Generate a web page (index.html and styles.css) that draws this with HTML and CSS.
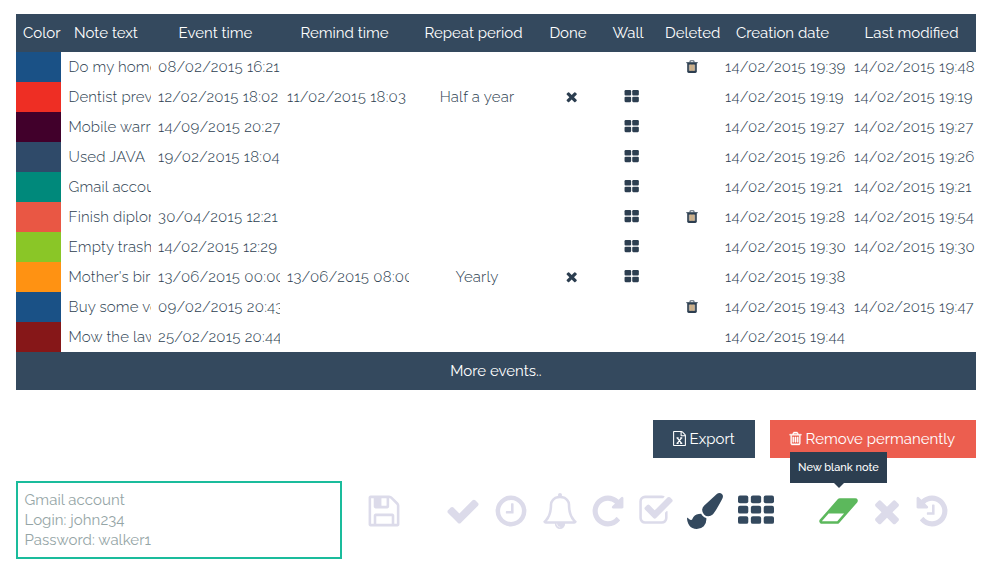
FILE: index.html
```html
<!DOCTYPE html>
<html lang="en">
<head>
<meta charset="utf-8">
<title>Notes</title>
<link rel="stylesheet" href="styles.css">
</head>
<body>
<svg class="sprite" aria-hidden="true">
<symbol id="save" viewBox="0 0 1792 1792"><path d="M512 1536h768v-384h-768v384zm896 0h128v-896q0-14-10-38.5t-20-34.5l-281-281q-10-10-34-20t-39-10v416q0 40-28 68t-68 28h-576q-40 0-68-28t-28-68v-416h-128v1280h128v-416q0-40 28-68t68-28h832q40 0 68 28t28 68v416zm-384-928v-320q0-13-9.5-22.5t-22.5-9.5h-192q-13 0-22.5 9.5t-9.5 22.5v320q0 13 9.5 22.5t22.5 9.5h192q13 0 22.5-9.5t9.5-22.5zm640 32v928q0 40-28 68t-68 28h-1344q-40 0-68-28t-28-68v-1344q0-40 28-68t68-28h928q40 0 88 20t76 48l280 280q28 28 48 76t20 88z"/></symbol>
<symbol id="check" viewBox="0 0 1792 1792"><path d="M1671 566q0 40-28 68l-724 724-136 136q-28 28-68 28t-68-28l-136-136-362-362q-28-28-28-68t28-68l136-136q28-28 68-28t68 28l294 295 656-657q28-28 68-28t68 28l136 136q28 28 28 68z"/></symbol>
<symbol id="clock" viewBox="0 0 1792 1792"><path d="M1024 544v448q0 14-9 23t-23 9h-320q-14 0-23-9t-9-23v-64q0-14 9-23t23-9h224v-352q0-14 9-23t23-9h64q14 0 23 9t9 23zm416 352q0-148-73-273t-198-198-273-73-273 73-198 198-73 273 73 273 198 198 273 73 273-73 198-198 73-273zm224 0q0 209-103 385.5t-279.5 279.5-385.5 103-385.5-103-279.5-279.5-103-385.5 103-385.5 279.5-279.5 385.5-103 385.5 103 279.5 279.5 103 385.5z"/></symbol>
<symbol id="bell" viewBox="0 0 1792 1792"><path d="M912 1696q0-16-16-16-59 0-101.5-42.5t-42.5-101.5q0-16-16-16t-16 16q0 73 51.5 124.5t124.5 51.5q16 0 16-16zm-666-288h1300q-266-300-266-832 0-51-24-105t-69-103-121.5-80.5-169.5-31.5-169.5 31.5-121.5 80.5-69 103-24 105q0 532-266 832zm1482 0q0 52-38 90t-90 38h-448q0 106-75 181t-181 75-181-75-75-181h-448q-52 0-90-38t-38-90q50-42 91-88t85-119.5 74.5-158.5 50-206 19.5-260q0-152 117-282.5t307-158.5q-8-19-8-39 0-40 28-68t68-28 68 28 28 68q0 20-8 39 190 28 307 158.5t117 282.5q0 139 19.5 260t50 206 74.5 158.5 85 119.5 91 88z"/></symbol>
<symbol id="repeat" viewBox="0 0 1792 1792"><path d="M1664 256v448q0 26-19 45t-45 19h-448q-42 0-59-40-17-39 14-69l138-138q-148-137-349-137-104 0-198.5 40.5t-163.5 109.5-109.5 163.5-40.5 198.5 40.5 198.5 109.5 163.5 163.5 109.5 198.5 40.5q119 0 225-52t179-147q7-10 23-12 15 0 25 9l137 138q9 8 9.5 20.5t-7.5 22.5q-109 132-264 204.5t-327 72.5q-156 0-298-61t-245-164-164-245-61-298 61-298 164-245 245-164 298-61q147 0 284.5 55.5t244.5 156.5l130-129q29-31 70-14 39 17 39 59z"/></symbol>
<symbol id="checkbox" viewBox="0 0 1792 1792"><path d="M1472 930v318q0 119-84.5 203.5t-203.5 84.5h-832q-119 0-203.5-84.5t-84.5-203.5v-832q0-119 84.5-203.5t203.5-84.5h832q63 0 117 25 15 7 18 23 3 17-9 29l-49 49q-10 10-23 10-3 0-9-2-23-6-45-6h-832q-66 0-113 47t-47 113v832q0 66 47 113t113 47h832q66 0 113-47t47-113v-254q0-13 9-22l64-64q10-10 23-10 6 0 12 3 20 8 20 29zm231-489l-814 814q-24 24-57 24t-57-24l-430-430q-24-24-24-57t24-57l110-110q24-24 57-24t57 24l263 263 647-647q24-24 57-24t57 24l110 110q24 24 24 57t-24 57z"/></symbol>
<symbol id="brush" viewBox="0 0 1792 1792"><path d="M1615 0q70 0 122.5 46.5t52.5 116.5q0 63-45 151-332 629-465 752-97 91-218 91-126 0-216.5-92.5t-90.5-219.5q0-128 92-212l638-579q59-54 130-54zm-909 1034q39 76 106.5 130t150.5 76l1 71q4 213-129.5 347t-348.5 134q-123 0-218-46.5t-152.5-127.5-86.5-183-29-220q7 5 41 30t62 44.5 59 36.5 46 17q41 0 55-37 25-66 57.5-112.5t69.5-76 88-47.5 103-25.5 125-10.5z"/></symbol>
<symbol id="grid" viewBox="0 0 1792 1792"><rect x="0" y="128" width="512" height="384" rx="96"/><rect x="640" y="128" width="512" height="384" rx="96"/><rect x="1280" y="128" width="512" height="384" rx="96"/><rect x="0" y="640" width="512" height="384" rx="96"/><rect x="640" y="640" width="512" height="384" rx="96"/><rect x="1280" y="640" width="512" height="384" rx="96"/><rect x="0" y="1152" width="512" height="384" rx="96"/><rect x="640" y="1152" width="512" height="384" rx="96"/><rect x="1280" y="1152" width="512" height="384" rx="96"/></symbol>
<symbol id="wall" viewBox="0 0 1792 1792"><rect x="64" y="128" width="768" height="640" rx="128"/><rect x="960" y="128" width="768" height="640" rx="128"/><rect x="64" y="896" width="768" height="640" rx="128"/><rect x="960" y="896" width="768" height="640" rx="128"/></symbol>
<symbol id="eraser" viewBox="0 0 2048 1792"><path d="M960 1408l336-384h-768l-336 384h768zm1013-1077q15 34 9.5 71.5t-30.5 65.5l-896 1024q-38 44-96 44h-768q-38 0-69.5-20.5t-47.5-54.5q-15-34-9.5-71.5t30.5-65.5l896-1024q38-44 96-44h768q38 0 69.5 20.5t47.5 54.5z"/></symbol>
<symbol id="times" viewBox="0 0 1792 1792"><path d="M1490 1322q0 40-28 68l-136 136q-28 28-68 28t-68-28l-294-294-294 294q-28 28-68 28t-68-28l-136-136q-28-28-28-68t28-68l294-294-294-294q-28-28-28-68t28-68l136-136q28-28 68-28t68 28l294 294 294-294q28-28 68-28t68 28l136 136q28 28 28 68t-28 68l-294 294 294 294q28 28 28 68z"/></symbol>
<symbol id="history" viewBox="0 0 1792 1792"><path d="M1664 896q0 156-61 298t-164 245-245 164-298 61q-172 0-327-72.5t-264-204.5q-7-10-6.5-22.5t8.5-20.5l137-138q10-9 25-9 16 2 23 12 73 95 179 147t225 52q104 0 198.5-40.5t163.5-109.5 109.5-163.5 40.5-198.5-40.5-198.5-109.5-163.5-163.5-109.5-198.5-40.5q-98 0-188 35.5t-160 101.5l137 138q31 30 14 69-17 40-59 40h-448q-26 0-45-19t-19-45v-448q0-42 40-59 39-17 69 14l130 129q107-101 244.5-156.5t284.5-55.5 298 61 245 164 164 245 61 298zm-640-288v448q0 14-9 23t-23 9h-320q-14 0-23-9t-9-23v-64q0-14 9-23t23-9h224v-352q0-14 9-23t23-9h64q14 0 23 9t9 23z"/></symbol>
<symbol id="trash" viewBox="0 0 1792 1792"><path d="M704 736v576q0 14-9 23t-23 9h-64q-14 0-23-9t-9-23v-576q0-14 9-23t23-9h64q14 0 23 9t9 23zm256 0v576q0 14-9 23t-23 9h-64q-14 0-23-9t-9-23v-576q0-14 9-23t23-9h64q14 0 23 9t9 23zm256 0v576q0 14-9 23t-23 9h-64q-14 0-23-9t-9-23v-576q0-14 9-23t23-9h64q14 0 23 9t9 23zm128 724v-948h-896v948q0 22 7 40.5t14.5 27 10.5 8.5h832q3 0 10.5-8.5t14.5-27 7-40.5zm-672-1076h448l-48-117q-7-9-17-11h-317q-10 2-17 11zm928 32v64q0 14-9 23t-23 9h-96v948q0 83-47 143.5t-113 60.5h-832q-66 0-113-58.5t-47-141.5v-952h-96q-14 0-23-9t-9-23v-64q0-14 9-23t23-9h309l70-167q15-37 54-63t79-26h320q40 0 79 26t54 63l70 167h309q14 0 23 9t9 23z"/></symbol>
<symbol id="bin" viewBox="0 0 12 13"><path d="M4 2.4V1.6Q4 .7 5 .7H7Q8 .7 8 1.6V2.4" fill="none" stroke="currentColor" stroke-width="1.1" opacity=".8"/><rect x=".3" y="2" width="11.4" height="1.2" opacity=".8"/><path d="M1.2 3H10.8V11.6Q10.8 13 9.4 13H2.6Q1.2 13 1.2 11.6Z"/><rect x="2.8" y="4.6" width="6.4" height="6.2" fill="#b3a99c"/><path d="M4.9 4.6V10.8M7.1 4.6V10.8" stroke="#e6b877" stroke-width="1"/></symbol>
<symbol id="sheet" viewBox="0 0 1792 1792"><path d="M1596 380q28 28 48 76t20 88v1152q0 40-28 68t-68 28h-1344q-40 0-68-28t-28-68v-1600q0-40 28-68t68-28h896q40 0 88 20t76 48zm-444-244v376h376q-10-29-22-41l-313-313q-12-12-41-22zm384 1528v-1024h-416q-40 0-68-28t-28-68v-416h-768v1536h1280z"/><path d="M620 820L1150 1490M1150 820L620 1490M540 820h250M980 820h250M540 1490h250M980 1490h250" fill="none" stroke="currentColor" stroke-width="150"/></symbol>
</svg>
<main>
<section class="table">
<div class="row head"><span class="h-color">Color</span><span class="h-note">Note text</span><span class="h-event">Event time</span><span class="h-remind">Remind time</span><span class="h-repeat">Repeat period</span><span class="h-done">Done</span><span class="h-wall">Wall</span><span class="h-deleted">Deleted</span><span class="h-created">Creation date</span><span class="h-modified">Last modified</span></div>
<div class="row"><i class="blue"></i><span class="note">Do my home</span><span>08/02/2015 16:21</span><span></span><span></span><span></span><span></span><span class="mid"><svg class="bin"><use href="#bin"/></svg></span><span>14/02/2015 19:39</span><span>14/02/2015 19:48</span></div>
<div class="row"><i class="red"></i><span class="note">Dentist prev</span><span>12/02/2015 18:02</span><span>11/02/2015 18:03</span><span class="mid">Half a year</span><span class="mid"><svg><use href="#times"/></svg></span><span class="mid"><svg><use href="#wall"/></svg></span><span></span><span>14/02/2015 19:19</span><span>14/02/2015 19:19</span></div>
<div class="row"><i class="plum"></i><span class="note">Mobile warr</span><span>14/09/2015 20:27</span><span></span><span></span><span></span><span class="mid"><svg><use href="#wall"/></svg></span><span></span><span>14/02/2015 19:27</span><span>14/02/2015 19:27</span></div>
<div class="row"><i class="slate"></i><span class="note">Used JAVA</span><span>19/02/2015 18:04</span><span></span><span></span><span></span><span class="mid"><svg><use href="#wall"/></svg></span><span></span><span>14/02/2015 19:26</span><span>14/02/2015 19:26</span></div>
<div class="row"><i class="teal"></i><span class="note">Gmail accou</span><span></span><span></span><span></span><span></span><span class="mid"><svg><use href="#wall"/></svg></span><span></span><span>14/02/2015 19:21</span><span>14/02/2015 19:21</span></div>
<div class="row"><i class="coral"></i><span class="note">Finish diplom</span><span>30/04/2015 12:21</span><span></span><span></span><span></span><span class="mid"><svg><use href="#wall"/></svg></span><span class="mid"><svg class="bin"><use href="#bin"/></svg></span><span>14/02/2015 19:28</span><span>14/02/2015 19:54</span></div>
<div class="row"><i class="green"></i><span class="note">Empty trash</span><span>14/02/2015 12:29</span><span></span><span></span><span></span><span class="mid"><svg><use href="#wall"/></svg></span><span></span><span>14/02/2015 19:30</span><span>14/02/2015 19:30</span></div>
<div class="row"><i class="orange"></i><span class="note">Mother's bir</span><span>13/06/2015 00:00</span><span>13/06/2015 08:00</span><span class="mid">Yearly</span><span class="mid"><svg><use href="#times"/></svg></span><span class="mid"><svg><use href="#wall"/></svg></span><span></span><span>14/02/2015 19:38</span><span></span></div>
<div class="row"><i class="blue"></i><span class="note">Buy some ve</span><span>09/02/2015 20:43</span><span></span><span></span><span></span><span></span><span class="mid"><svg class="bin"><use href="#bin"/></svg></span><span>14/02/2015 19:43</span><span>14/02/2015 19:47</span></div>
<div class="row"><i class="maroon"></i><span class="note">Mow the law</span><span>25/02/2015 20:44</span><span></span><span></span><span></span><span></span><span></span><span>14/02/2015 19:44</span><span></span></div>
<div class="more">More events..</div>
</section>
<div class="actions">
<div class="btn export"><svg><use href="#sheet"/></svg><span>Export</span></div>
<div class="btn remove"><svg><use href="#trash"/></svg><span>Remove permanently</span></div>
</div>
<div class="editor">
<div class="text"><div>Gmail account</div><div>Login: john234</div><div>Password: walker1</div></div>
<div class="tools">
<svg class="t-save"><use href="#save"/></svg><svg class="t-check"><use href="#check"/></svg><svg class="t-clock"><use href="#clock"/></svg><svg class="t-bell"><use href="#bell"/></svg><svg class="t-repeat"><use href="#repeat"/></svg><svg class="t-box"><use href="#checkbox"/></svg><svg class="t-brush on"><use href="#brush"/></svg><svg class="t-grid on"><use href="#grid"/></svg>
<div class="t-eraser"><svg><use href="#eraser"/></svg><div class="tip"><span>New blank note</span></div></div>
<svg class="t-times"><use href="#times"/></svg><svg class="t-history"><use href="#history"/></svg>
</div>
</div>
</main>
</body>
</html>
```
FILE: styles.css
```css
* { box-sizing: border-box; }
body { margin: 0; background: #fff; font: 400 15px/20px Raleway, Lato, sans-serif; color: #34495e; }
.sprite { position: absolute; width: 0; height: 0; }
svg { display: block; fill: currentColor; flex: none; }
main { width: 960px; margin: 14px 0 0 16px; }
.row { display: grid; grid-template-columns: 45px 90px 129px 129px 129px 60px 60px 60px 129px 129px; height: 30px; font-weight: 300; font-size: 15px; }
.row > span { padding: 5px 0 5px 0; margin-left: 7px; overflow: hidden; white-space: nowrap; color: #2c3e50; letter-spacing: 0.26px; }
.row > .note { margin-left: 7.6px; letter-spacing: 0.15px; }
.row > .mid { display: flex; justify-content: center; letter-spacing: 0.2px; }
.row svg { width: 15.4px; height: 15.4px; margin: 2.4px 0 0 0.6px; }
.row .bin { width: 12px; height: 13px; margin: 3px 0 0 1px; }
.row.head { height: 38px; background: #34495e; font-weight: 400; }
.row.head > span { margin: 0; padding: 9px 0; text-align: center; color: #fff; overflow: visible; letter-spacing: 0; }
.row.head > .h-color, .row.head > .h-deleted { padding-left: 7px; text-align: left; }
.blue { background: #1a5186; }
.red { background: #ee2e24; }
.plum { background: #41002b; }
.slate { background: #2f4a69; }
.teal { background: #00897b; }
.coral { background: #e95744; }
.green { background: #8ac627; }
.orange { background: #ff9212; }
.maroon { background: #861718; }
.more { height: 38px; background: #34495e; color: #fff; text-align: center; padding: 9px 0; }
.actions { display: flex; justify-content: flex-end; gap: 15px; margin-top: 30px; }
.btn { display: flex; align-items: center; height: 38px; color: #fff; white-space: nowrap; }
.btn svg { width: 15px; height: 15px; margin: -1px 2.6px 0 0; }
.export { width: 102px; padding-left: 19px; background: #34495e; }
.remove { width: 206px; padding-left: 18px; background: #ec5e4f; }
.remove svg { stroke: currentColor; stroke-width: 50px; }
.editor { display: flex; margin-top: 23px; }
.text { width: 326px; height: 78px; padding: 7px 7px 7px 6.5px; border: 2px solid #1abc9c; color: #95a5a6; letter-spacing: 0.06px; }
.tools { display: flex; margin: 11.5px 0 0 24.4px; height: 36px; color: #dcdbea; }
.tools svg { width: 36px; height: 36px; }
.tools .on { color: #34495e; }
.t-check { margin-left: 42.2px; }
.t-clock { margin-left: 12.8px; }
.t-bell { margin-left: 12.3px; }
.t-repeat { margin-left: 12.7px; }
.t-box { margin-left: 11.3px; }
.t-brush { margin-left: 13.3px; }
.t-grid { margin-left: 15px; }
.t-eraser { position: relative; margin-left: 44.5px; color: #5cb85c; }
.tools .t-eraser svg { width: 41.1px; }
.t-times { margin-left: 9.5px; }
.t-history { margin-left: 8.5px; }
.tip { position: absolute; left: -28.5px; top: -40.5px; width: 97px; height: 31px; background: #2c3e50; color: #fff; font-size: 11px; font-weight: 500; line-height: 31px; text-align: center; white-space: nowrap; }
.tip::after { content: ""; position: absolute; left: 44px; top: 31px; border: 5px solid transparent; border-top-color: #2c3e50; border-bottom: 0; }
```
